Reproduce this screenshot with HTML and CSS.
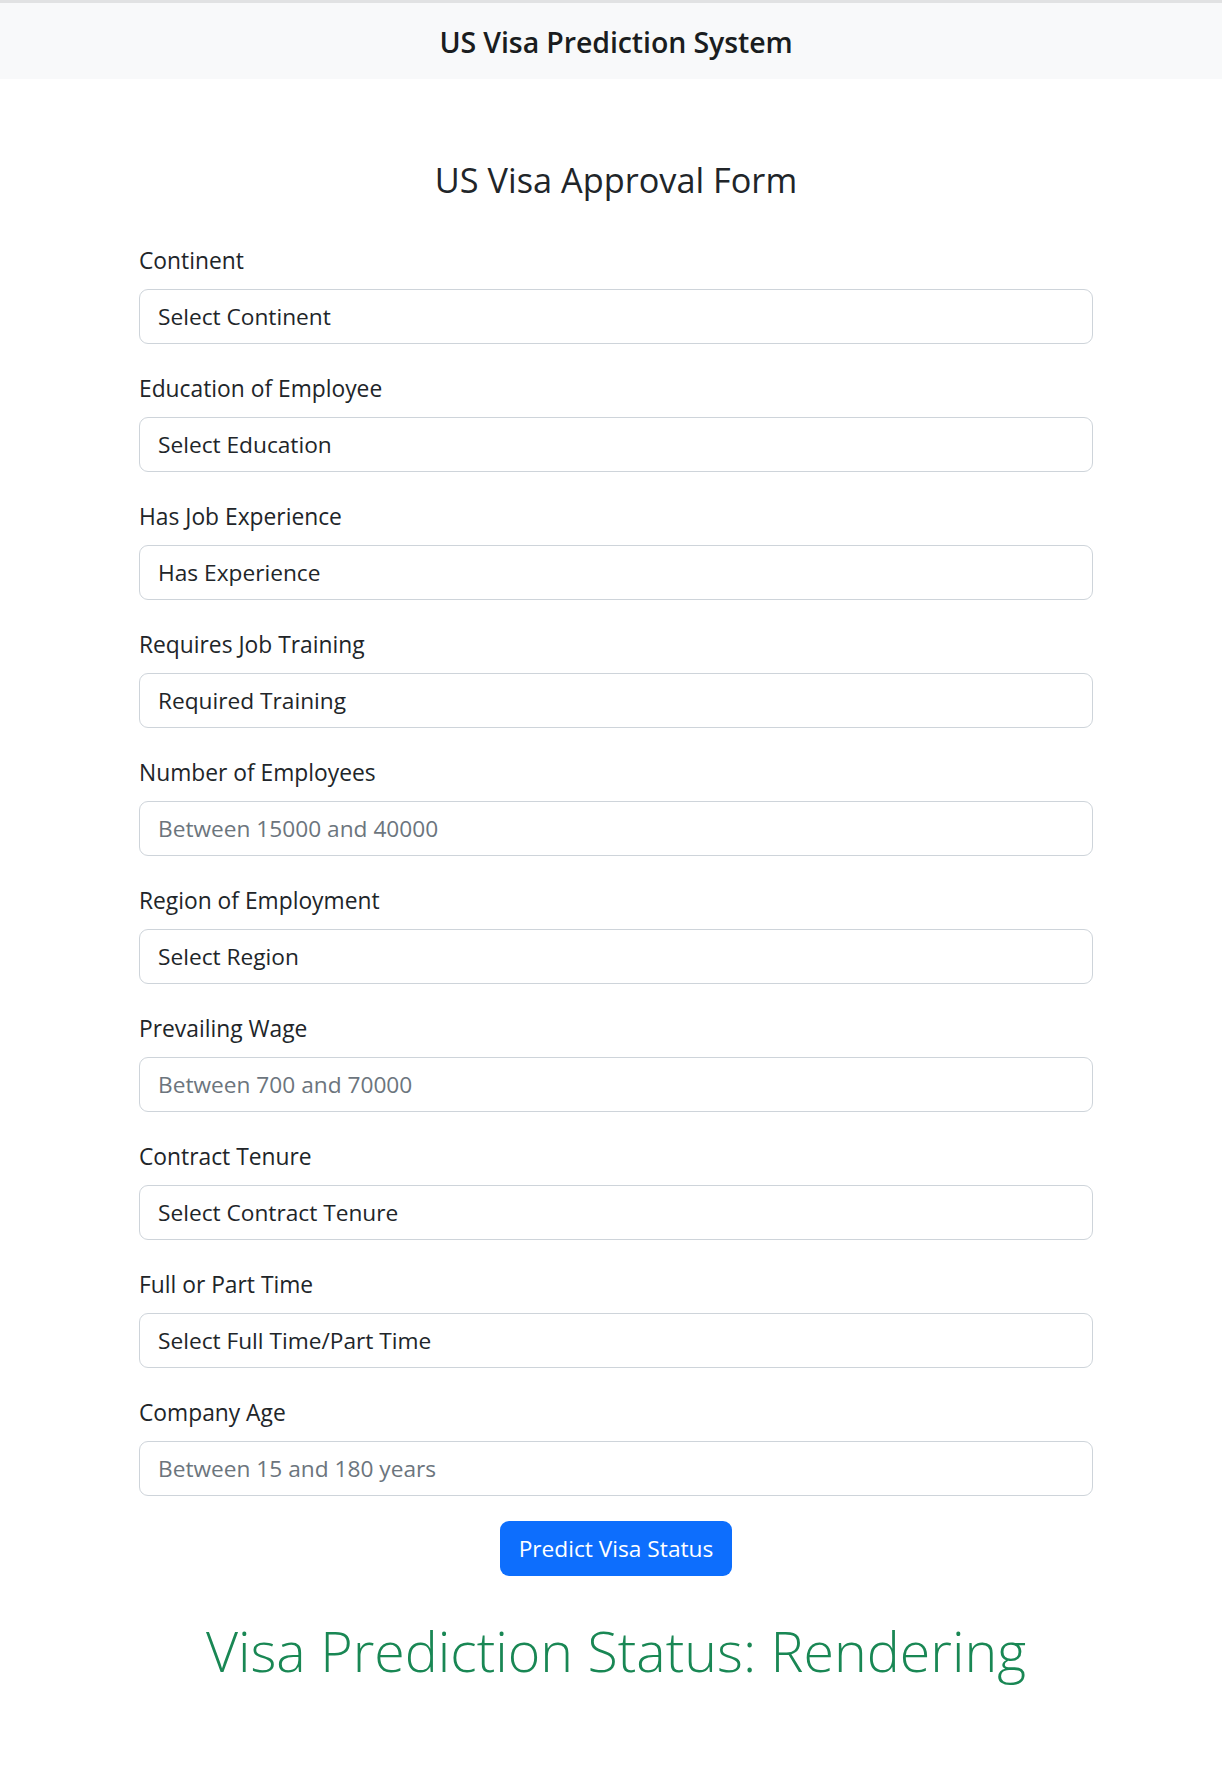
FILE: index.html
```html
<!DOCTYPE html>
<html lang="en">
<head>
<meta charset="utf-8">
<title>US Visa Prediction System</title>
<link rel="stylesheet" href="styles.css">
</head>
<body>
<div class="topline"></div>
<nav class="navbar">
  <span class="brand">US Visa Prediction System</span>
</nav>
<main class="page">
  <form class="form">
    <h2 class="form-title">US Visa Approval Form</h2>

    <div class="field">
      <label class="label" for="continent">Continent</label>
      <select class="control" id="continent"><option>Select Continent</option></select>
    </div>
    <div class="field">
      <label class="label" for="education">Education of Employee</label>
      <select class="control" id="education"><option>Select Education</option></select>
    </div>
    <div class="field">
      <label class="label" for="experience">Has Job Experience</label>
      <select class="control" id="experience"><option>Has Experience</option></select>
    </div>
    <div class="field">
      <label class="label" for="training">Requires Job Training</label>
      <select class="control" id="training"><option>Required Training</option></select>
    </div>
    <div class="field">
      <label class="label" for="employees">Number of Employees</label>
      <input class="control" id="employees" type="text" placeholder="Between 15000 and 40000">
    </div>
    <div class="field">
      <label class="label" for="region">Region of Employment</label>
      <select class="control" id="region"><option>Select Region</option></select>
    </div>
    <div class="field">
      <label class="label" for="wage">Prevailing Wage</label>
      <input class="control" id="wage" type="text" placeholder="Between 700 and 70000">
    </div>
    <div class="field">
      <label class="label" for="tenure">Contract Tenure</label>
      <select class="control" id="tenure"><option>Select Contract Tenure</option></select>
    </div>
    <div class="field">
      <label class="label" for="fulltime">Full or Part Time</label>
      <select class="control" id="fulltime"><option>Select Full Time/Part Time</option></select>
    </div>
    <div class="field last">
      <label class="label" for="age">Company Age</label>
      <input class="control" id="age" type="text" placeholder="Between 15 and 180 years">
    </div>

    <div class="actions">
      <button class="btn" type="button">Predict Visa Status</button>
    </div>
  </form>
  <p class="status">Visa Prediction Status: Rendering</p>
</main>
</body>
</html>
```

FILE: styles.css
```css
html, body {
  margin: 0;
  padding: 0;
  background: #ffffff;
}
body {
  font-family: "Open Sans", "Noto Sans", sans-serif;
  color: #212529;
}
.topline {
  height: 3px;
  background: #e1e2e3;
}
.navbar {
  height: 76px;
  background: #f8f9fa;
  display: flex;
  align-items: center;
  justify-content: center;
  padding-left: 10px;
  padding-top: 2px;
  box-sizing: border-box;
}
.brand {
  font-size: 28.5px;
  font-weight: 600;
  color: #1a1d20;
  letter-spacing: -0.1px;
}
.page {
  padding-left: 10px;
}
.form {
  width: 954px;
  margin: 0 auto;
  padding-top: 81px;
}
.form-title {
  margin: 0 0 43px;
  text-align: center;
  font-size: 34.3px;
  font-weight: 400;
  line-height: 40px;
  color: #212529;
}
.field {
  display: flex;
  flex-direction: column;
  margin-bottom: 27px;
}
.field.last {
  margin-bottom: 25px;
}
.label {
  font-size: 22.8px;
  line-height: 35px;
  margin-bottom: 11px;
}
.control {
  box-sizing: border-box;
  height: 55px;
  width: 100%;
  border: 1.4px solid #ced4da;
  border-radius: 9px;
  padding: 0 18px;
  font-family: inherit;
  font-size: 22.7px;
  color: #212529;
  background: #ffffff;
  appearance: none;
  -webkit-appearance: none;
  outline: none;
}
.control::placeholder {
  color: #6c757d;
  opacity: 1;
}
.actions {
  display: flex;
  justify-content: center;
}
.btn {
  height: 55px;
  width: 232px;
  border: none;
  border-radius: 9px;
  background: #0d6efd;
  color: #ffffff;
  font-family: inherit;
  font-size: 22.7px;
  padding: 0;
}
.status {
  margin: 40px 0 0;
  text-align: center;
  font-size: 55.5px;
  font-weight: 300;
  line-height: 70px;
  color: #198754;
}
```
